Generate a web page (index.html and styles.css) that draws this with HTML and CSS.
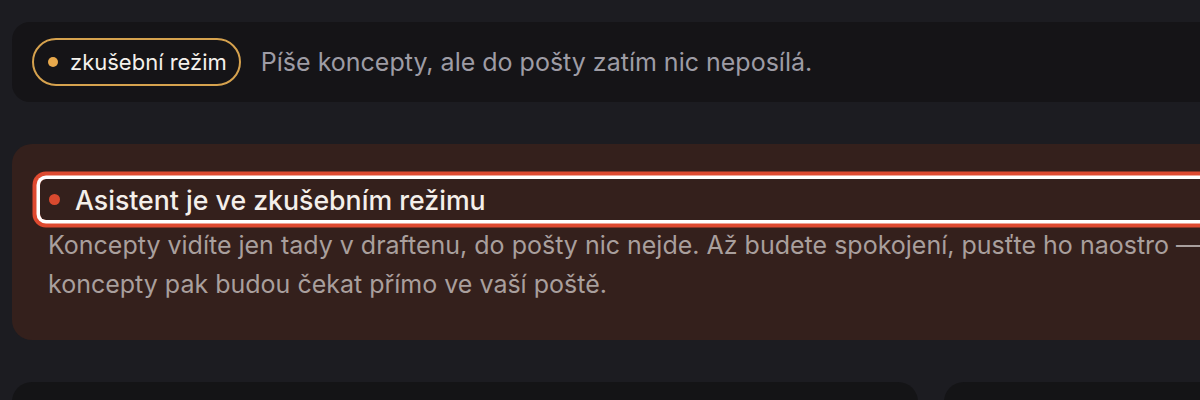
FILE: index.html
```html
<!DOCTYPE html>
<html lang="cs">
<head>
<meta charset="utf-8">
<title>Draften</title>
<link rel="stylesheet" href="styles.css">
</head>
<body>
<main class="page">
  <section class="mode-bar">
    <span class="pill"><span class="pill-dot"></span>zkušební režim</span>
    <span class="mode-desc">Píše koncepty, ale do pošty zatím nic neposílá.</span>
  </section>
  <section class="notice">
    <h2 class="notice-title" tabindex="0"><span class="notice-dot"></span>Asistent je ve zkušebním režimu</h2>
    <p class="notice-text">Koncepty vidíte jen tady v draftenu, do pošty nic nejde. Až budete spokojení, pusťte ho naostro — koncepty pak budou čekat přímo ve vaší poště.</p>
  </section>
  <section class="cards">
    <div class="card"></div>
    <div class="card"></div>
  </section>
</main>
</body>
</html>
```
FILE: styles.css
```css
html, body {
  margin: 0;
  padding: 0;
  background: #1c1c21;
  overflow: hidden;
  height: 400px;
}
body {
  font-family: Inter, "Noto Sans", sans-serif;
  color: #f2eeea;
}
.page {
  width: 1250px;
  padding: 22px 0 0 12px;
  display: flex;
  flex-direction: column;
  gap: 42px;
}
.mode-bar {
  height: 80px;
  box-sizing: border-box;
  background: #151417;
  border-radius: 18px;
  padding: 0 20px;
  display: flex;
  align-items: center;
  gap: 20px;
}
.pill {
  display: inline-flex;
  align-items: center;
  gap: 12px;
  height: 48px;
  box-sizing: border-box;
  padding: 0 12px 0 14px;
  border: 2px solid #d6a24e;
  border-radius: 999px;
  font-size: 22px;
  color: #f4f1ec;
}
.pill-dot {
  width: 10px;
  height: 10px;
  border-radius: 50%;
  background: #e8a94c;
}
.mode-desc {
  font-size: 25px;
  color: #9e9ca5;
}
.notice {
  background: #34201c;
  border-radius: 20px;
  padding: 35px 36px 36px 36px;
}
.notice-title {
  margin: 0 0 0 -8px;
  height: 41px;
  display: flex;
  align-items: center;
  gap: 15px;
  padding-left: 9px;
  font-size: 26.7px;
  font-weight: 500;
  color: #f4efea;
  border-radius: 6px;
  box-shadow: 0 0 0 3.5px #ffffff, 0 0 0 7.5px #de4a30;
  outline: none;
}
.notice-dot {
  width: 11px;
  height: 11px;
  border-radius: 50%;
  background: #d94a2f;
  flex: none;
}
.notice-text {
  margin: 6px 0 0 0;
  font-size: 25px;
  line-height: 39px;
  color: #a99f9d;
}
.cards {
  display: grid;
  grid-template-columns: 906px 1fr;
  gap: 26px;
}
.card {
  height: 120px;
  background: #141416;
  border-radius: 20px;
}
```
